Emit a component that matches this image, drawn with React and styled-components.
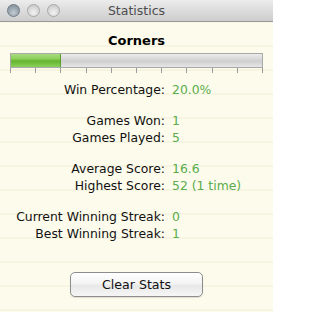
import React from "react";
import styled, { createGlobalStyle } from "styled-components";

const Global = createGlobalStyle`
  html, body { margin: 0; padding: 0; }
  body { width: 273px; height: 312px; overflow: hidden; font-family: "DejaVu Sans", "Liberation Sans", sans-serif; }
`;

const Window = styled.div`
  width: 273px;
  height: 312px;
  display: flex;
  flex-direction: column;
  background-color: #fdfcec;
  background-image: repeating-linear-gradient(
    to bottom,
    transparent 0px,
    transparent 20.5px,
    #f3f1dc 22px,
    transparent 23.5px,
    transparent 24px
  );
`;

const TitleBar = styled.div`
  height: 22px;
  flex: none;
  display: flex;
  align-items: center;
  position: relative;
  background: linear-gradient(to bottom, #ececec 0%, #dcdcdc 50%, #cdcdcd 100%);
  border-bottom: 1px solid #9a9a9a;
  box-sizing: border-box;
`;

const Lights = styled.div`
  display: flex;
  gap: 7px;
  padding-left: 7px;
`;

const Light = styled.div`
  width: 13px;
  height: 13px;
  border-radius: 50%;
  box-sizing: border-box;
  border: 1px solid ${(p) => (p.$dark ? "#6e7a84" : "#a8a8a8")};
  background: ${(p) =>
    p.$dark
      ? "radial-gradient(circle at 50% 70%, #c4ccd3 0%, #97a3ad 55%, #7c8893 100%)"
      : "radial-gradient(circle at 50% 70%, #f2f2f2 0%, #d8d8d8 55%, #c2c2c2 100%)"};
`;

const Title = styled.div`
  position: absolute;
  left: 0;
  right: 0;
  text-align: center;
  font-size: 12.5px;
  color: #4d4d4d;
  pointer-events: none;
`;

const Content = styled.div`
  display: flex;
  flex-direction: column;
  align-items: center;
  padding-top: 11px;
`;

const Heading = styled.div`
  font-size: 13px;
  font-weight: bold;
  color: #000;
  line-height: 16px;
`;

const Meter = styled.div`
  margin-top: 4px;
  width: 253px;
  display: flex;
  flex-direction: column;
`;

const Track = styled.div`
  height: 15px;
  box-sizing: border-box;
  border: 1px solid #a9a9a9;
  background: linear-gradient(to bottom, #ebebeb 0%, #dadada 35%, #cfcfcf 55%, #e6e6e6 100%);
  display: flex;
`;

const Fill = styled.div`
  height: 100%;
  background: linear-gradient(to bottom, #a8dd80 0%, #8ed05c 35%, #64b52e 55%, #8cd15a 100%);
  box-shadow: inset -1px 0 0 #5a9e2c;
`;

const Ticks = styled.div`
  display: flex;
  justify-content: space-between;
  height: 5px;
`;

const Tick = styled.div`
  width: 1px;
  height: 5px;
  background: #9b9b9b;
`;

const Stats = styled.div`
  align-self: stretch;
  margin-top: 8px;
  display: flex;
  flex-direction: column;
  gap: 14px;
`;

const Group = styled.div`
  display: grid;
  grid-template-columns: 165px auto;
  column-gap: 7px;
`;

const Label = styled.div`
  text-align: right;
  font-size: 12.4px;
  line-height: 17px;
  color: #111;
  white-space: nowrap;
`;

const Value = styled.div`
  font-size: 12.4px;
  line-height: 17px;
  color: #5aac4c;
  white-space: nowrap;
`;

const Button = styled.button`
  margin-top: 30px;
  width: 133px;
  height: 25px;
  border-radius: 5px;
  border: 1px solid #8d8d8d;
  background: linear-gradient(to bottom, #ffffff 0%, #f4f4f4 45%, #e8e8e8 55%, #f6f6f6 100%);
  box-shadow: 0 1px 1px rgba(0, 0, 0, 0.12);
  font-family: inherit;
  font-size: 12.6px;
  color: #111;
  padding: 0;
`;

const groups = [
  [["Win Percentage:", "20.0%"]],
  [["Games Won:", "1"], ["Games Played:", "5"]],
  [["Average Score:", "16.6"], ["Highest Score:", "52 (1 time)"]],
  [["Current Winning Streak:", "0"], ["Best Winning Streak:", "1"]],
];

export default function App() {
  return (
    <>
      <Global />
      <Window>
        <TitleBar>
          <Lights>
            <Light $dark />
            <Light />
            <Light />
          </Lights>
          <Title>Statistics</Title>
        </TitleBar>
        <Content>
          <Heading>Corners</Heading>
          <Meter>
            <Track>
              <Fill style={{ width: "20%" }} />
            </Track>
            <Ticks>
              {Array.from({ length: 11 }).map((_, i) => (
                <Tick key={i} />
              ))}
            </Ticks>
          </Meter>
          <Stats>
            {groups.map((g, gi) => (
              <Group key={gi}>
                {g.map(([l, v]) => (
                  <React.Fragment key={l}>
                    <Label>{l}</Label>
                    <Value>{v}</Value>
                  </React.Fragment>
                ))}
              </Group>
            ))}
          </Stats>
          <Button>Clear Stats</Button>
        </Content>
      </Window>
    </>
  );
}
